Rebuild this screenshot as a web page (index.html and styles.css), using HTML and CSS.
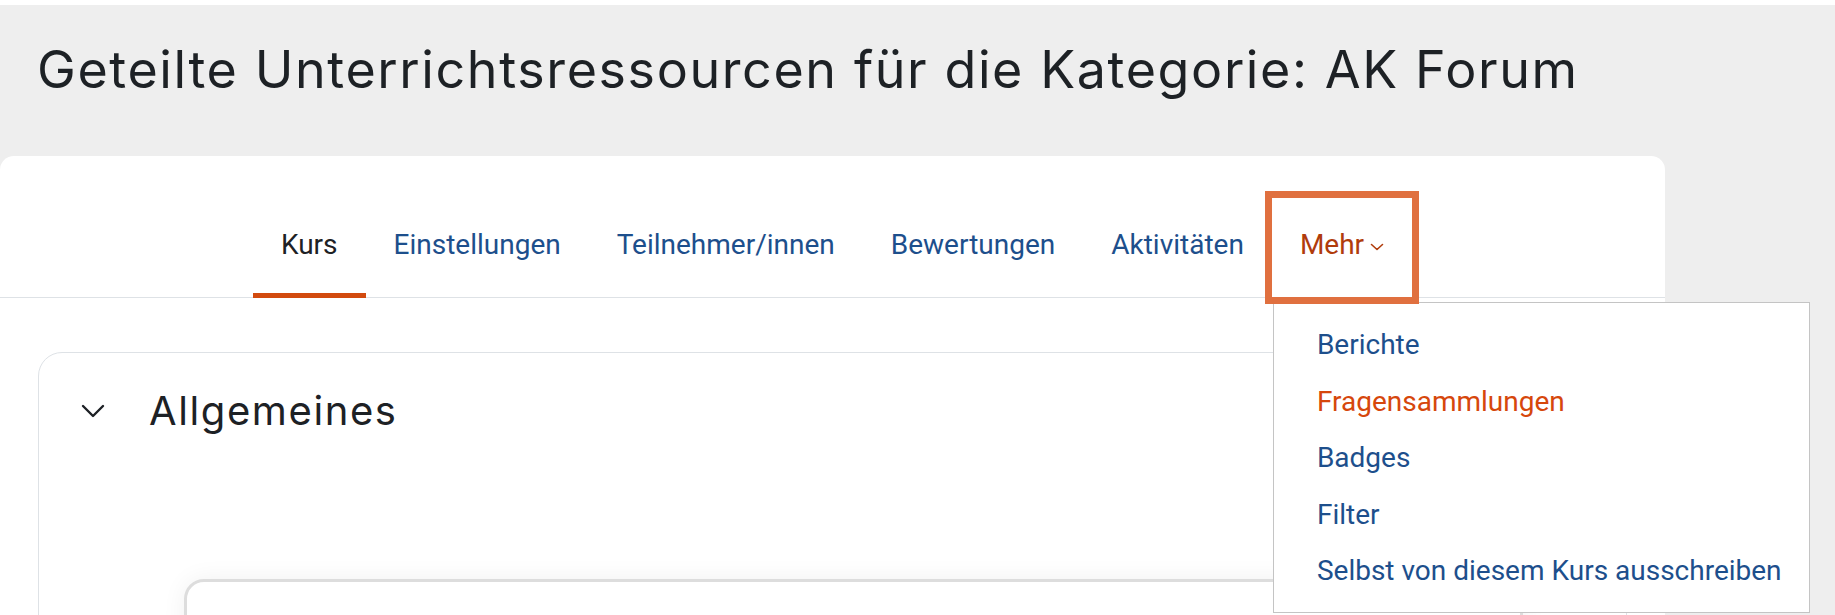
FILE: index.html
```html
<!DOCTYPE html>
<html lang="de">
<head>
  <meta charset="UTF-8">
  <meta name="viewport" content="width=device-width, initial-scale=1.0">
  <title>AK Forum</title>
  <link rel="stylesheet" href="styles.css">
</head>
<body>
  <div class="topbar"></div>
  <header class="page-header">
    <h1 class="page-title">Geteilte Unterrichtsressourcen für die Kategorie: AK Forum</h1>
  </header>

  <div class="card">
    <nav class="tabs">
      <ul class="tab-list">
        <li class="tab"><a class="tab-link active" href="#">Kurs</a></li>
        <li class="tab"><a class="tab-link" href="#">Einstellungen</a></li>
        <li class="tab"><a class="tab-link" href="#">Teilnehmer/innen</a></li>
        <li class="tab"><a class="tab-link" href="#">Bewertungen</a></li>
        <li class="tab"><a class="tab-link" href="#">Aktivitäten</a></li>
        <li class="tab tab-more">
          <a class="tab-link more-link" href="#">Mehr
            <svg class="caret" viewBox="0 0 14 8" width="14" height="8"><path d="M1.5 1.5 L7 6.5 L12.5 1.5" fill="none" stroke="currentColor" stroke-width="1.6" stroke-linecap="round" stroke-linejoin="round"/></svg>
          </a>
          <ul class="dropdown">
            <li><a class="dropdown-item" href="#">Berichte</a></li>
            <li><a class="dropdown-item current" href="#">Fragensammlungen</a></li>
            <li><a class="dropdown-item" href="#">Badges</a></li>
            <li><a class="dropdown-item" href="#">Filter</a></li>
            <li><a class="dropdown-item" href="#">Selbst von diesem Kurs ausschreiben</a></li>
          </ul>
        </li>
      </ul>
    </nav>

    <div class="content">
      <section class="section">
        <div class="section-head">
          <svg class="section-toggle" viewBox="0 0 24 14" width="24" height="14"><path d="M2 2 L12 12 L22 2" fill="none" stroke="currentColor" stroke-width="2.4" stroke-linecap="round" stroke-linejoin="round"/></svg>
          <h2 class="section-title">Allgemeines</h2>
        </div>
        <div class="activity"></div>
      </section>
    </div>
  </div>
</body>
</html>
```

FILE: styles.css
```css
html, body {
  height: 100%;
  overflow: hidden;
}
body {
  margin: 0;
  background-color: #eeeeee;
  color: #1d2125;
  font-family: Inter, "Noto Sans", sans-serif;
}
.topbar {
  height: 5px;
  background: white;
}
.page-header {
  padding: 34px 37px 55px;
}
.page-title {
  margin: 0;
  font-size: 52px;
  font-weight: 400;
  line-height: 1.2;
  letter-spacing: 1.6px;
}

.card {
  background: white;
  width: 1665px;
  min-height: 600px;
  border-radius: 14px;
}

/* tab navigation */
.tabs {
  padding-top: 42px;
  border-bottom: 1px solid #dee2e6;
}
.tab-list {
  list-style: none;
  margin: 0;
  padding: 0;
  display: flex;
  justify-content: center;
}
.tab {
  position: relative;
}
.tab-link {
  display: flex;
  align-items: center;
  gap: 6px;
  padding: 26px 28px 31px;
  font-family: Roboto, "Liberation Sans", sans-serif;
  font-size: 28px;
  line-height: 42px;
  color: #1d4f8c;
  text-decoration: none;
  position: relative;
}
.tab-link.active {
  color: #1d2125;
}
.tab-link.active::after {
  content: "";
  position: absolute;
  left: 0;
  right: 0;
  bottom: -1px;
  height: 5px;
  background: #d24a0e;
}
.more-link {
  color: #b03c0c;
}
.caret {
  margin-top: 4px;
}
/* highlight frame round "Mehr" */
.tab-more::after {
  content: "";
  position: absolute;
  top: -7px;
  left: -7px;
  right: -7px;
  bottom: -7px;
  border: 7px solid #e0703f;
  pointer-events: none;
  z-index: 3;
}

.dropdown {
  position: absolute;
  top: calc(100% + 5px);
  left: 1px;
  width: 537px;
  box-sizing: border-box;
  list-style: none;
  margin: 0;
  padding: 14px 0 12px;
  background: white;
  border: 1px solid #c4c4c4;
  z-index: 2;
}
.dropdown-item {
  display: block;
  padding: 0 28px 0 43px;
  font-family: Roboto, "Liberation Sans", sans-serif;
  font-size: 28px;
  line-height: 56.5px;
  color: #1d4f8c;
  text-decoration: none;
  white-space: nowrap;
}
.dropdown-item.current {
  color: #d6470c;
}

/* course content */
.content {
  padding: 54px 38px 0;
}
.section {
  border: 1px solid #dee2e6;
  border-radius: 24px;
  padding: 34px 43px 0 42px;
  min-height: 400px;
}
.section-head {
  display: flex;
  align-items: center;
  gap: 44px;
}
.section-toggle {
  color: #1d2125;
}
.section-title {
  margin: 0;
  font-size: 40px;
  font-weight: 400;
  line-height: 48px;
  letter-spacing: 1.6px;
}
.activity {
  margin: 144px 60px 0 103px;
  height: 200px;
  border: 3px solid #dddddd;
  border-radius: 20px;
  box-shadow: 0 0 24px rgba(0, 0, 0, 0.06);
}
```
